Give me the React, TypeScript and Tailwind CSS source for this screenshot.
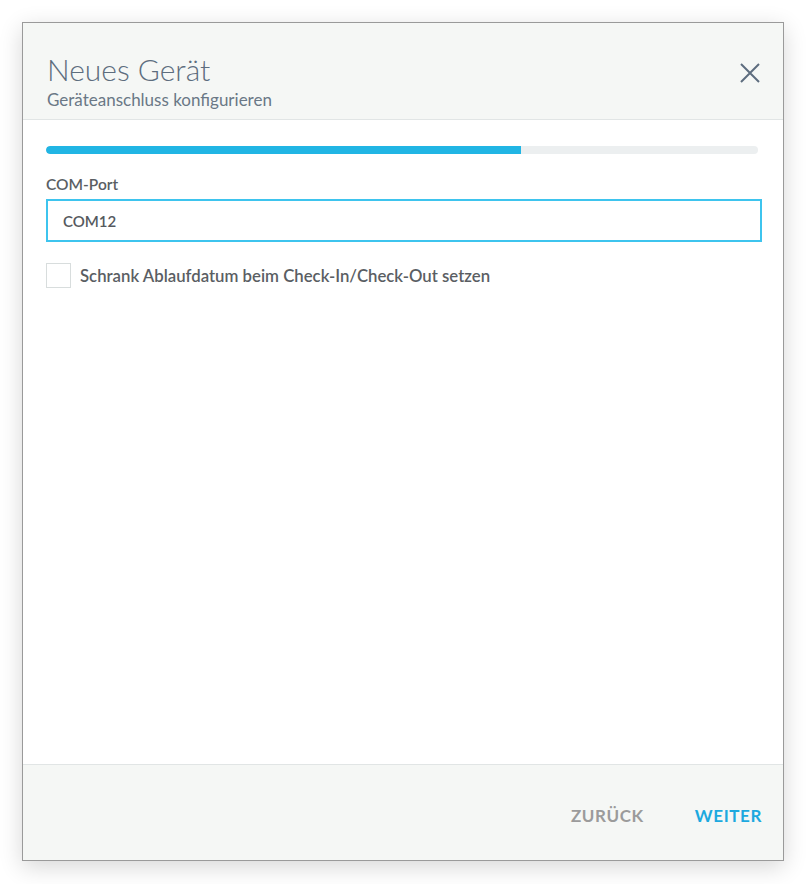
import { useState } from 'react';

export default function App() {
  const [port, setPort] = useState('COM12');
  const [checked, setChecked] = useState(false);
  const progress = 66.7;

  return (
    <div className="min-h-screen bg-white pl-[22px] pt-[22px] font-['Lato',sans-serif]">
      <div className="flex h-[839px] w-[762px] flex-col border border-[#9a9a9a] bg-white shadow-[0_6px_22px_rgba(0,0,0,0.16)]">
        {/* header */}
        <div className="flex items-start justify-between border-b border-[#e1e5e5] bg-[#f5f7f5] pb-[9px] pl-[24px] pr-[22px] pt-[29px]">
          <div>
            <h1 className="text-[30px] font-light leading-[34px] text-[#5d6d7e]">Neues Gerät</h1>
            <p className="mt-[4px] text-[17px] leading-[20px] text-[#6a7886]">Geräteanschluss konfigurieren</p>
          </div>
          <button className="mt-[10px] p-0 text-[#5d6d7e]">
            <svg width="22" height="22" viewBox="0 0 22 22" fill="none" stroke="currentColor" strokeWidth="2">
              <path d="M2 2 L20 20 M20 2 L2 20" />
            </svg>
          </button>
        </div>

        {/* body */}
        <div className="flex-1 pl-[23px] pr-[21px] pt-[26px]">
          <div className="mr-[4px] h-[8px] overflow-hidden rounded-full bg-[#eceff0]">
            <div className="h-full rounded-l-full bg-[#21b5e4]" style={{ width: `${progress}%` }} />
          </div>

          <label className="mt-[20px] block text-[15.5px] font-semibold leading-[20px] text-[#5a5e63]">COM-Port</label>
          <input
            autoFocus
            value={port}
            onChange={e => setPort(e.target.value)}
            className="mt-[5px] block h-[43px] w-full border-2 border-[#3ec4ee] bg-white px-[15px] text-[15px] font-semibold text-[#55595e] caret-[#333] outline-none"
          />

          <label className="mt-[21px] flex cursor-pointer items-center gap-[9px]">
            <input
              type="checkbox"
              checked={checked}
              onChange={e => setChecked(e.target.checked)}
              className="h-[25px] w-[25px] appearance-none border border-[#d8dddd] bg-white"
            />
            <span className="text-[16.75px] font-semibold text-[#5a5e63]">Schrank Ablaufdatum beim Check-In/Check-Out setzen</span>
          </label>
        </div>

        {/* footer */}
        <div className="flex h-[96px] items-center justify-end gap-[51px] border-t border-[#e1e5e5] bg-[#f5f7f5] pr-[21px] pt-[6px]">
          <button className="text-[17px] font-bold uppercase tracking-[0.6px] text-[#9b9b9b]">Zurück</button>
          <button className="text-[17px] font-bold uppercase tracking-[0.6px] text-[#1ca9df]">Weiter</button>
        </div>
      </div>
    </div>
  );
}
